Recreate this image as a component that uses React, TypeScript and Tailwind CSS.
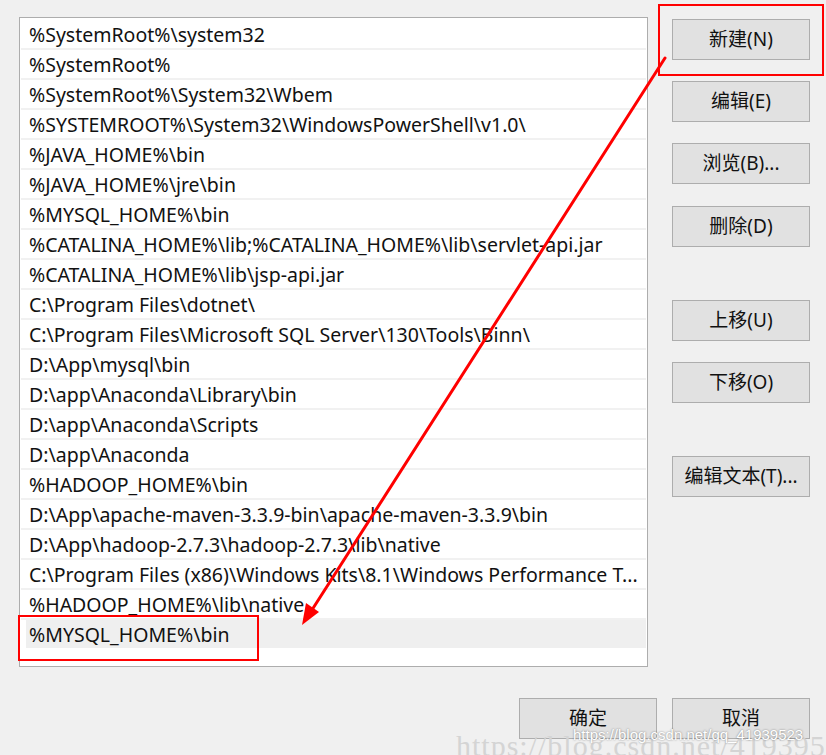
import React from "react";

const rows: string[] = [
  "%SystemRoot%\\system32",
  "%SystemRoot%",
  "%SystemRoot%\\System32\\Wbem",
  "%SYSTEMROOT%\\System32\\WindowsPowerShell\\v1.0\\",
  "%JAVA_HOME%\\bin",
  "%JAVA_HOME%\\jre\\bin",
  "%MYSQL_HOME%\\bin",
  "%CATALINA_HOME%\\lib;%CATALINA_HOME%\\lib\\servlet-api.jar",
  "%CATALINA_HOME%\\lib\\jsp-api.jar",
  "C:\\Program Files\\dotnet\\",
  "C:\\Program Files\\Microsoft SQL Server\\130\\Tools\\Binn\\",
  "D:\\App\\mysql\\bin",
  "D:\\app\\Anaconda\\Library\\bin",
  "D:\\app\\Anaconda\\Scripts",
  "D:\\app\\Anaconda",
  "%HADOOP_HOME%\\bin",
  "D:\\App\\apache-maven-3.3.9-bin\\apache-maven-3.3.9\\bin",
  "D:\\App\\hadoop-2.7.3\\hadoop-2.7.3\\lib\\native",
  "C:\\Program Files (x86)\\Windows Kits\\8.1\\Windows Performance T...",
  "%HADOOP_HOME%\\lib\\native",
  "%MYSQL_HOME%\\bin",
];

function Btn({ label, className = "" }: { label: string; className?: string }) {
  return (
    <div
      className={
        "w-[138px] h-[41px] flex items-center justify-center bg-[#e1e1e1] border border-[#adadad] text-[19px] text-[#111] " +
        className
      }
    >
      {label}
    </div>
  );
}

export default function App() {
  return (
    <div
      className="relative w-[826px] h-[755px] overflow-hidden bg-[#f0f0f0] flex flex-col"
      style={{ fontFamily: '"Noto Sans", "Noto Sans CJK SC", sans-serif' }}
    >
      <div className="flex items-start">
        {/* list */}
        <div className="ml-[19px] mt-[17px] w-[629px] h-[650px] bg-white border border-[#adadad] pt-[2px] px-[1px] flex flex-col">
          {rows.map((r, i) => {
            const selected = i === rows.length - 1;
            return (
              <div
                key={i}
                className={
                  "h-[30px] shrink-0 flex items-center border-b-2 " +
                  (selected ? "border-white" : "border-[#f1f1f1]")
                }
              >
                <div
                  className={
                    "h-full w-full flex items-center whitespace-nowrap text-[19.5px] leading-none pt-[2px] text-[#111] " +
                    (selected ? "ml-[5px] pl-[3px] bg-[#efefef]" : "pl-[8px]")
                  }
                >
                  {r}
                </div>
              </div>
            );
          })}
        </div>

        {/* right buttons */}
        <div className="ml-[24px] mt-[19px] flex flex-col">
          <Btn label="新建(N)" />
          <Btn label="编辑(E)" className="mt-[21px]" />
          <Btn label="浏览(B)..." className="mt-[21px]" />
          <Btn label="删除(D)" className="mt-[22px]" />
          <Btn label="上移(U)" className="mt-[53px]" />
          <Btn label="下移(O)" className="mt-[21px]" />
          <Btn label="编辑文本(T)..." className="mt-[53px]" />
        </div>
      </div>

      {/* bottom buttons */}
      <div className="flex justify-end pr-[16px] mt-[31px] gap-[15px]">
        <Btn label="确定" />
        <Btn label="取消" />
      </div>

      {/* watermarks */}
      <div
        className="absolute left-[456px] top-[731px] whitespace-nowrap text-[30px] leading-none text-[#d4d4d4] tracking-[1px]"
        style={{ fontFamily: '"Liberation Serif", serif' }}
      >
        https://blog.csdn.net/41939523
      </div>
      <div
        className="absolute left-[573px] top-[725px] whitespace-nowrap text-[15px] leading-[20px] text-white [text-shadow:0_0_2px_rgba(0,0,0,0.5)]"
        style={{ fontFamily: '"Liberation Sans", sans-serif' }}
      >
        https://blog.csdn.net/qq_41939523
      </div>

      {/* red annotation boxes */}
      <div className="absolute left-[658px] top-[4px] w-[166px] h-[72px] border-2 border-[#ff0000]" />
      <div className="absolute left-[18px] top-[615px] w-[241px] h-[46px] border-2 border-[#ff0000]" />

      {/* arrow */}
      <svg className="absolute left-0 top-0" width="826" height="755" viewBox="0 0 826 755">
        <line x1="665" y1="58" x2="310" y2="613" stroke="#ff0000" strokeWidth="3" strokeLinecap="round" />
        <polygon points="302,625 319,612 306,603" fill="#ff0000" />
      </svg>
    </div>
  );
}
